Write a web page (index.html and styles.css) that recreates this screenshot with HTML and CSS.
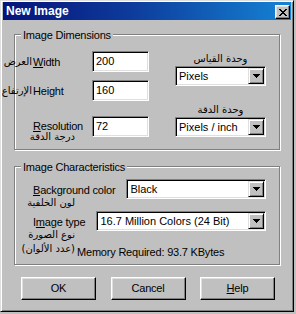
FILE: index.html
```html
<!DOCTYPE html>
<html lang="en">
<head>
    <meta charset="UTF-8">
    <title>New Image</title>
    <link rel="stylesheet" href="styles.css">
</head>
<body>
    <div class="window">
        <div class="titlebar">
            <span class="title">New Image</span>
            <span class="close-btn">
                <svg width="8" height="7" viewBox="0 0 8 7"><path d="M0 0h2v1H0zM6 0h2v1H6zM1 1h2v1H1zM5 1h2v1H5zM2 2h4v1H2zM3 3h2v1H3zM2 4h4v1H2zM1 5h2v1H1zM5 5h2v1H5zM0 6h2v1H0zM6 6h2v1H6z" fill="#000"/></svg>
            </span>
        </div>

        <div class="dialog">
            <div class="group">
                <div class="group-title">Image Dimensions</div>
                <div class="dims">
                    <div class="dims-fields">
                        <div class="field-row">
                            <div class="field-label"><span class="ar ar-side">العرض</span><u>W</u>idth</div>
                            <div class="textbox">200</div>
                        </div>
                        <div class="field-row">
                            <div class="field-label"><span class="ar ar-side">الإرتفاع</span>Height</div>
                            <div class="textbox">160</div>
                        </div>
                        <div class="field-row row-res">
                            <div class="field-label">
                                <div class="label-main"><u>R</u>esolution</div>
                                <div class="ar ar-sub">درجة الدقة</div>
                            </div>
                            <div class="textbox">72</div>
                        </div>
                    </div>

                    <div class="dims-units">
                        <div class="ar unit-caption">وحدة القياس</div>
                        <div class="combo">
                            <span class="combo-text">Pixels</span>
                            <span class="combo-btn"><svg width="7" height="4" viewBox="0 0 7 4"><path d="M0 0h7v1H0zM1 1h5v1H1zM2 2h3v1H2zM3 3h1v1H3z" fill="#000"/></svg></span>
                        </div>
                        <div class="ar unit-caption caption-res">وحدة الدقة</div>
                        <div class="combo">
                            <span class="combo-text">Pixels / inch</span>
                            <span class="combo-btn"><svg width="7" height="4" viewBox="0 0 7 4"><path d="M0 0h7v1H0zM1 1h5v1H1zM2 2h3v1H2zM3 3h1v1H3z" fill="#000"/></svg></span>
                        </div>
                    </div>
                </div>
            </div>

            <div class="group group-chars">
                <div class="group-title">Image Characteristics</div>
                <div class="chars">
                    <div class="char-row">
                        <div class="char-label">
                            <div class="label-main"><u>B</u>ackground color</div>
                            <div class="ar ar-sub">لون الخلفية</div>
                        </div>
                        <div class="combo combo-wide">
                            <span class="combo-text">Black</span>
                            <span class="combo-btn"><svg width="7" height="4" viewBox="0 0 7 4"><path d="M0 0h7v1H0zM1 1h5v1H1zM2 2h3v1H2zM3 3h1v1H3z" fill="#000"/></svg></span>
                        </div>
                    </div>
                    <div class="char-row row-type">
                        <div class="char-label">
                            <div class="label-main">I<u>m</u>age type</div>
                            <div class="ar ar-sub">نوع الصورة</div>
                        </div>
                        <div class="combo combo-wide">
                            <span class="combo-text">16.7 Million Colors (24 Bit)</span>
                            <span class="combo-btn"><svg width="7" height="4" viewBox="0 0 7 4"><path d="M0 0h7v1H0zM1 1h5v1H1zM2 2h3v1H2zM3 3h1v1H3z" fill="#000"/></svg></span>
                        </div>
                    </div>
                    <div class="memory-row">
                        <span class="ar ar-sub">(عدد الألوان)</span>
                        <span class="memory">Memory Required: 93.7 KBytes</span>
                    </div>
                </div>
            </div>

            <div class="buttons">
                <div class="btn">OK</div>
                <div class="btn">Cancel</div>
                <div class="btn"><u>H</u>elp</div>
            </div>
        </div>
    </div>
</body>
</html>
```

FILE: styles.css
```css
body {
    margin: 0;
    background-color: #c0c0c0;
    font-family: "Liberation Sans", Arial, sans-serif;
    font-size: 11px;
    letter-spacing: -0.2px;
    color: #000;
}

u {
    text-decoration: underline;
}

.window {
    width: 294px;
    height: 312px;
    box-sizing: border-box;
    background-color: #c0c0c0;
    border: 1px solid;
    border-color: #dfdfdf #000 #000 #dfdfdf;
    box-shadow: inset 1px 1px #fff, inset -1px -1px #808080;
    padding: 1px 2px 2px;
}

.titlebar {
    height: 18px;
    display: flex;
    align-items: center;
    justify-content: space-between;
    padding-left: 3px;
    background: linear-gradient(90deg, #06127a 0%, #0d3c9c 45%, #1583d4 100%);
}

.title {
    color: #fff;
    font-weight: bold;
    font-size: 12px;
    letter-spacing: 0;
}

.close-btn {
    width: 15px;
    height: 14px;
    box-sizing: border-box;
    margin: 2px 1px 0 0;
    display: flex;
    align-items: center;
    justify-content: center;
    background-color: #c0c0c0;
    border: 1px solid;
    border-color: #fff #000 #000 #fff;
    box-shadow: inset -1px -1px #808080, inset 1px 1px #dfdfdf;
}

.dialog {
    padding: 0 11px;
}

/* etched group frame */
.group {
    margin-top: 14px;
    border: 1px solid #808080;
    box-shadow: inset 1px 1px #fff, 1px 1px #fff;
}

.group-chars {
    margin-top: 16px;
}

.group-title {
    width: max-content;
    margin: -7px 0 0 6px;
    padding: 0 2px;
    line-height: 14px;
    background-color: #c0c0c0;
}

.ar {
    font-family: "DejaVu Sans", sans-serif;
    font-size: 10px;
    letter-spacing: 0;
    direction: rtl;
    white-space: nowrap;
}

/* Image Dimensions */
.dims {
    display: flex;
    justify-content: space-between;
    margin: 9px 13px 12px 18px;
}

.dims-fields {
    display: flex;
    flex-direction: column;
}

.field-row {
    display: flex;
    align-items: center;
    height: 21px;
}

.field-row + .field-row {
    margin-top: 8px;
}

.field-row.row-res {
    margin-top: 15px;
    align-items: flex-start;
}

.field-label {
    position: relative;
    width: 59px;
}

.row-res .label-main {
    line-height: 21px;
}

.ar-side {
    position: absolute;
    right: 100%;
    top: 0;
    margin-right: 1px;
}

.ar-sub {
    display: block;
    width: 42px;
    line-height: 11px;
    margin-top: -6px;
}

.textbox {
    width: 57px;
    height: 21px;
    box-sizing: border-box;
    padding: 0 3px;
    line-height: 19px;
    letter-spacing: 0;
    background-color: #fff;
    border: 1px solid;
    border-color: #808080 #fff #fff #808080;
    box-shadow: inset 1px 1px #000, inset -1px -1px #dfdfdf;
}

.dims-units {
    width: 91px;
    display: flex;
    flex-direction: column;
}

.unit-caption {
    line-height: 15px;
    text-align: center;
}

.caption-res {
    margin-top: 16px;
}

/* combo box */
.combo {
    height: 20px;
    box-sizing: border-box;
    padding: 1px;
    display: flex;
    align-items: center;
    background-color: #fff;
    border: 1px solid;
    border-color: #808080 #fff #fff #808080;
    box-shadow: inset 1px 1px #000, inset -1px -1px #dfdfdf;
}

.combo-text {
    padding-left: 2px;
    letter-spacing: 0;
    white-space: nowrap;
}

.combo-btn {
    margin-left: auto;
    width: 16px;
    height: 16px;
    box-sizing: border-box;
    display: flex;
    align-items: center;
    justify-content: center;
    background-color: #c0c0c0;
    border: 1px solid;
    border-color: #dfdfdf #000 #000 #dfdfdf;
    box-shadow: inset 1px 1px #fff, inset -1px -1px #808080;
}

/* Image Characteristics */
.chars {
    margin: 5px 13px 5px 18px;
}

.char-row {
    display: flex;
    align-items: flex-start;
    height: 20px;
}

.char-row.row-type {
    margin-top: 12px;
}

.char-label {
    flex: none;
}

.char-label .label-main {
    line-height: 20px;
    padding-top: 1px;
}

.char-label .ar-sub {
    margin-top: -3px;
}

.combo-wide {
    flex: 1;
    margin-left: 11px;
}

.memory-row {
    display: flex;
    align-items: flex-start;
    margin-top: 14px;
    line-height: 14px;
}

.memory-row .ar-sub {
    line-height: 12px;
    margin-top: -2px;
}

.memory {
    margin-left: 2px;
}

/* bottom buttons */
.buttons {
    display: flex;
    justify-content: space-between;
    margin: 12px 5px 0 7px;
}

.btn {
    width: 75px;
    height: 23px;
    box-sizing: border-box;
    line-height: 21px;
    text-align: center;
    background-color: #c0c0c0;
    border: 1px solid;
    border-color: #fff #000 #000 #fff;
    box-shadow: inset -1px -1px #808080, inset 1px 1px #dfdfdf;
}
```
